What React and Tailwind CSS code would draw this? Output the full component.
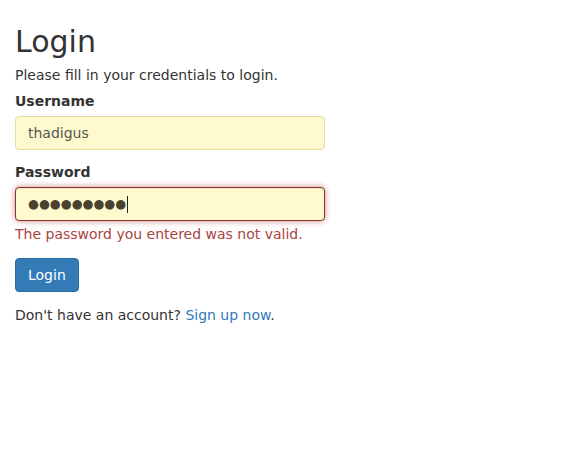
export default function App() {
  return (
    <div
      className="min-h-[459px] bg-white px-[15px] pt-[25px] text-[14px] leading-[20px] text-[#333]"
      style={{ fontFamily: '"DejaVu Sans", sans-serif' }}
    >
      <div className="w-[310px]">
        <h2 className="mb-[7px] text-[30px] font-normal leading-[33px]">Login</h2>
        <p className="mb-[6px]">Please fill in your credentials to login.</p>

        <form onSubmit={(e) => e.preventDefault()}>
          {/* Username */}
          <div className="mb-[12px]">
            <label className="mb-[5px] block font-bold">Username</label>
            <div className="flex h-[34px] items-center rounded-[4px] border border-[#e8d99e] bg-[#fffacd] px-[12px] text-[#555]">
              thadigus
            </div>
          </div>

          {/* Password (error) */}
          <div className="mb-[14px]">
            <label className="mb-[5px] block font-bold">Password</label>
            <div className="flex h-[34px] items-center rounded-[4px] border border-[#843534] bg-[#fffacd] px-[12px] text-[#4a4130] shadow-[inset_0_1px_1px_rgba(0,0,0,0.075),0_0_6px_#ce8483]">
              <span className="text-[12.5px]">●●●●●●●●●</span>
              <span className="ml-[1px] inline-block h-[17px] w-px bg-[#222]" />
            </div>
            <span className="mt-[3px] block text-[#a94442]">
              The password you entered was not valid.
            </span>
          </div>

          <button
            type="submit"
            className="h-[34px] rounded-[4px] border border-[#2e6da4] bg-[#337ab7] px-[12px] text-white"
          >
            Login
          </button>

          <p className="mt-[13px]">
            Don't have an account?{" "}
            <a href="#" className="text-[#337ab7]">
              Sign up now
            </a>
            .
          </p>
        </form>
      </div>
    </div>
  );
}
